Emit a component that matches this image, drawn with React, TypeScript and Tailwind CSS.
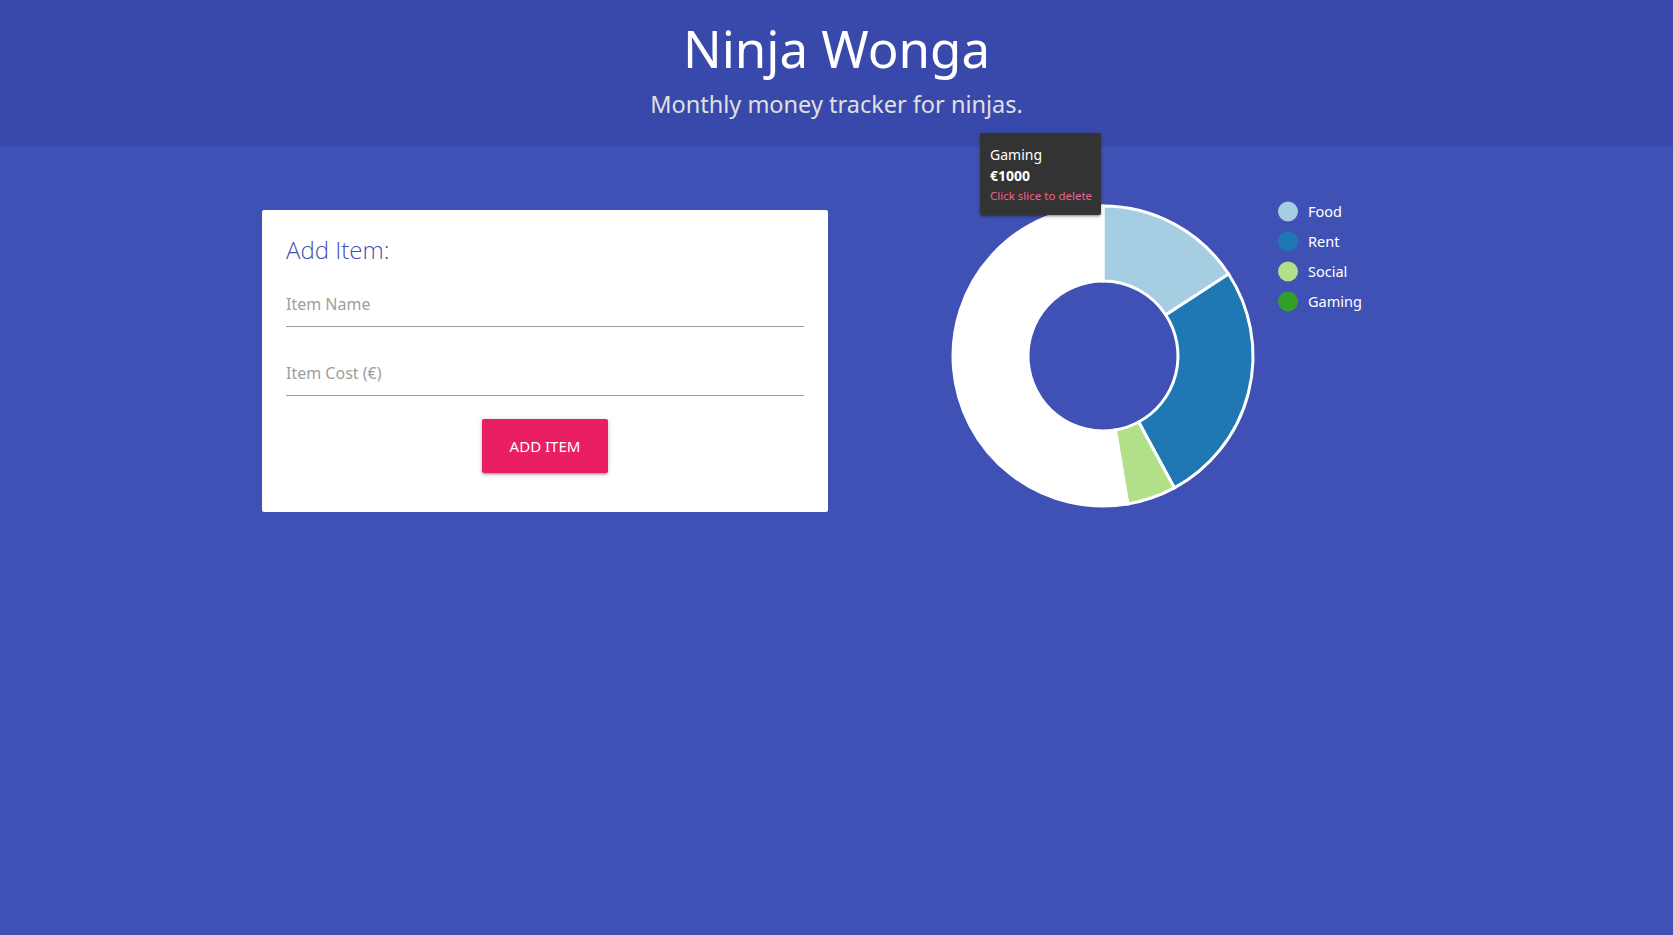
import React from 'react';

type Slice = { name: string; cost: number; color: string; hovered?: boolean };

const data: Slice[] = [
  { name: 'Food', cost: 300, color: '#a6cee3' },
  { name: 'Rent', cost: 500, color: '#1f78b4' },
  { name: 'Social', cost: 100, color: '#b2df8a' },
  { name: 'Gaming', cost: 1000, color: '#33a02c', hovered: true },
];

function arcPath(a0: number, a1: number, R: number, r: number): string {
  const p = (rad: number, a: number) => [rad * Math.sin(a), -rad * Math.cos(a)];
  const large = a1 - a0 > Math.PI ? 1 : 0;
  const [x0, y0] = p(R, a0);
  const [x1, y1] = p(R, a1);
  const [x2, y2] = p(r, a1);
  const [x3, y3] = p(r, a0);
  return `M${x0},${y0}A${R},${R} 0 ${large} 1 ${x1},${y1}L${x2},${y2}A${r},${r} 0 ${large} 0 ${x3},${y3}Z`;
}

function Donut() {
  const total = data.reduce((s, d) => s + d.cost, 0);
  let acc = 0;
  const slices = data.map((d) => {
    const a0 = (acc / total) * Math.PI * 2;
    acc += d.cost;
    const a1 = (acc / total) * Math.PI * 2;
    return { ...d, a0, a1 };
  });
  return (
    <svg width={450} height={450} className="block">
      <g transform="translate(155,155)">
        {slices.map((s) => (
          <path
            key={s.name}
            d={arcPath(s.a0, s.a1, 150, 75)}
            fill={s.hovered ? '#ffffff' : s.color}
            stroke="#ffffff"
            strokeWidth={3}
          />
        ))}
      </g>
      <g transform="translate(340,10)">
        {data.map((d, i) => (
          <g key={d.name} transform={`translate(0,${i * 30})`}>
            <circle cx={0} cy={0.5} r={10} fill={d.color} />
            <text x={20} y={5.5} fill="#ffffff" fontSize={14.5} fontFamily="'Noto Sans', sans-serif">
              {d.name}
            </text>
          </g>
        ))}
      </g>
    </svg>
  );
}

export default function App() {
  return (
    <div className="min-h-screen bg-[#3f51b5] font-['Noto_Sans',sans-serif]">
      <header className="bg-[#3949ab] h-[146px] flex flex-col items-center pt-[19px]">
        <h2 className="text-white text-[51px] leading-[58px] font-normal">Ninja Wonga</h2>
        <p className="text-[#e0e0e0] text-[23.5px] leading-[32px] mt-[11px]">
          Monthly money tracker for ninjas.
        </p>
      </header>
      <main className="w-[1171px] mx-auto flex pt-[55px]">
        <div className="w-[588px] px-[11px]">
          <form className="bg-white rounded-[2px] mt-[9px] px-6 pt-6 pb-[39px]">
            <div className="text-[24px] leading-[32px] font-light text-[#3f51b5] font-['Open_Sans','Noto_Sans',sans-serif]">
              Add Item:
            </div>
            <input
              type="text"
              placeholder="Item Name"
              className="block w-full h-[46px] mt-[15px] border-b border-[#9e9e9e] outline-none bg-transparent text-[16px] text-gray-800 placeholder:text-[#9e9e9e]"
            />
            <input
              type="text"
              placeholder="Item Cost (€)"
              className="block w-full h-[46px] mt-[23px] border-b border-[#9e9e9e] outline-none bg-transparent text-[16px] text-gray-800 placeholder:text-[#9e9e9e]"
            />
            <div className="flex justify-center mt-[23px]">
              <button
                type="button"
                className="h-[54px] px-7 bg-[#e91e63] text-white text-[15px] rounded-[2px] uppercase shadow-[0_2px_2px_0_rgba(0,0,0,0.14),0_3px_1px_-2px_rgba(0,0,0,0.12),0_1px_5px_0_rgba(0,0,0,0.2)]"
              >
                Add Item
              </button>
            </div>
          </form>
        </div>
        <div className="relative ml-[109px]">
          <Donut />
          <div className="absolute left-[32px] top-[-68px] w-[121px] bg-[#333333] rounded-[2px] pl-[10px] pr-[6px] pt-[11px] pb-[9px] whitespace-nowrap shadow-[0_2px_2px_0_rgba(0,0,0,0.14),0_3px_1px_-2px_rgba(0,0,0,0.12),0_1px_5px_0_rgba(0,0,0,0.2)]">
            <div className="text-white text-[14px] leading-[21px]">Gaming</div>
            <div className="text-white text-[14px] leading-[21px] font-bold">€1000</div>
            <div className="text-[#f06292] text-[11.5px] leading-[20px]">Click slice to delete</div>
          </div>
        </div>
      </main>
    </div>
  );
}
